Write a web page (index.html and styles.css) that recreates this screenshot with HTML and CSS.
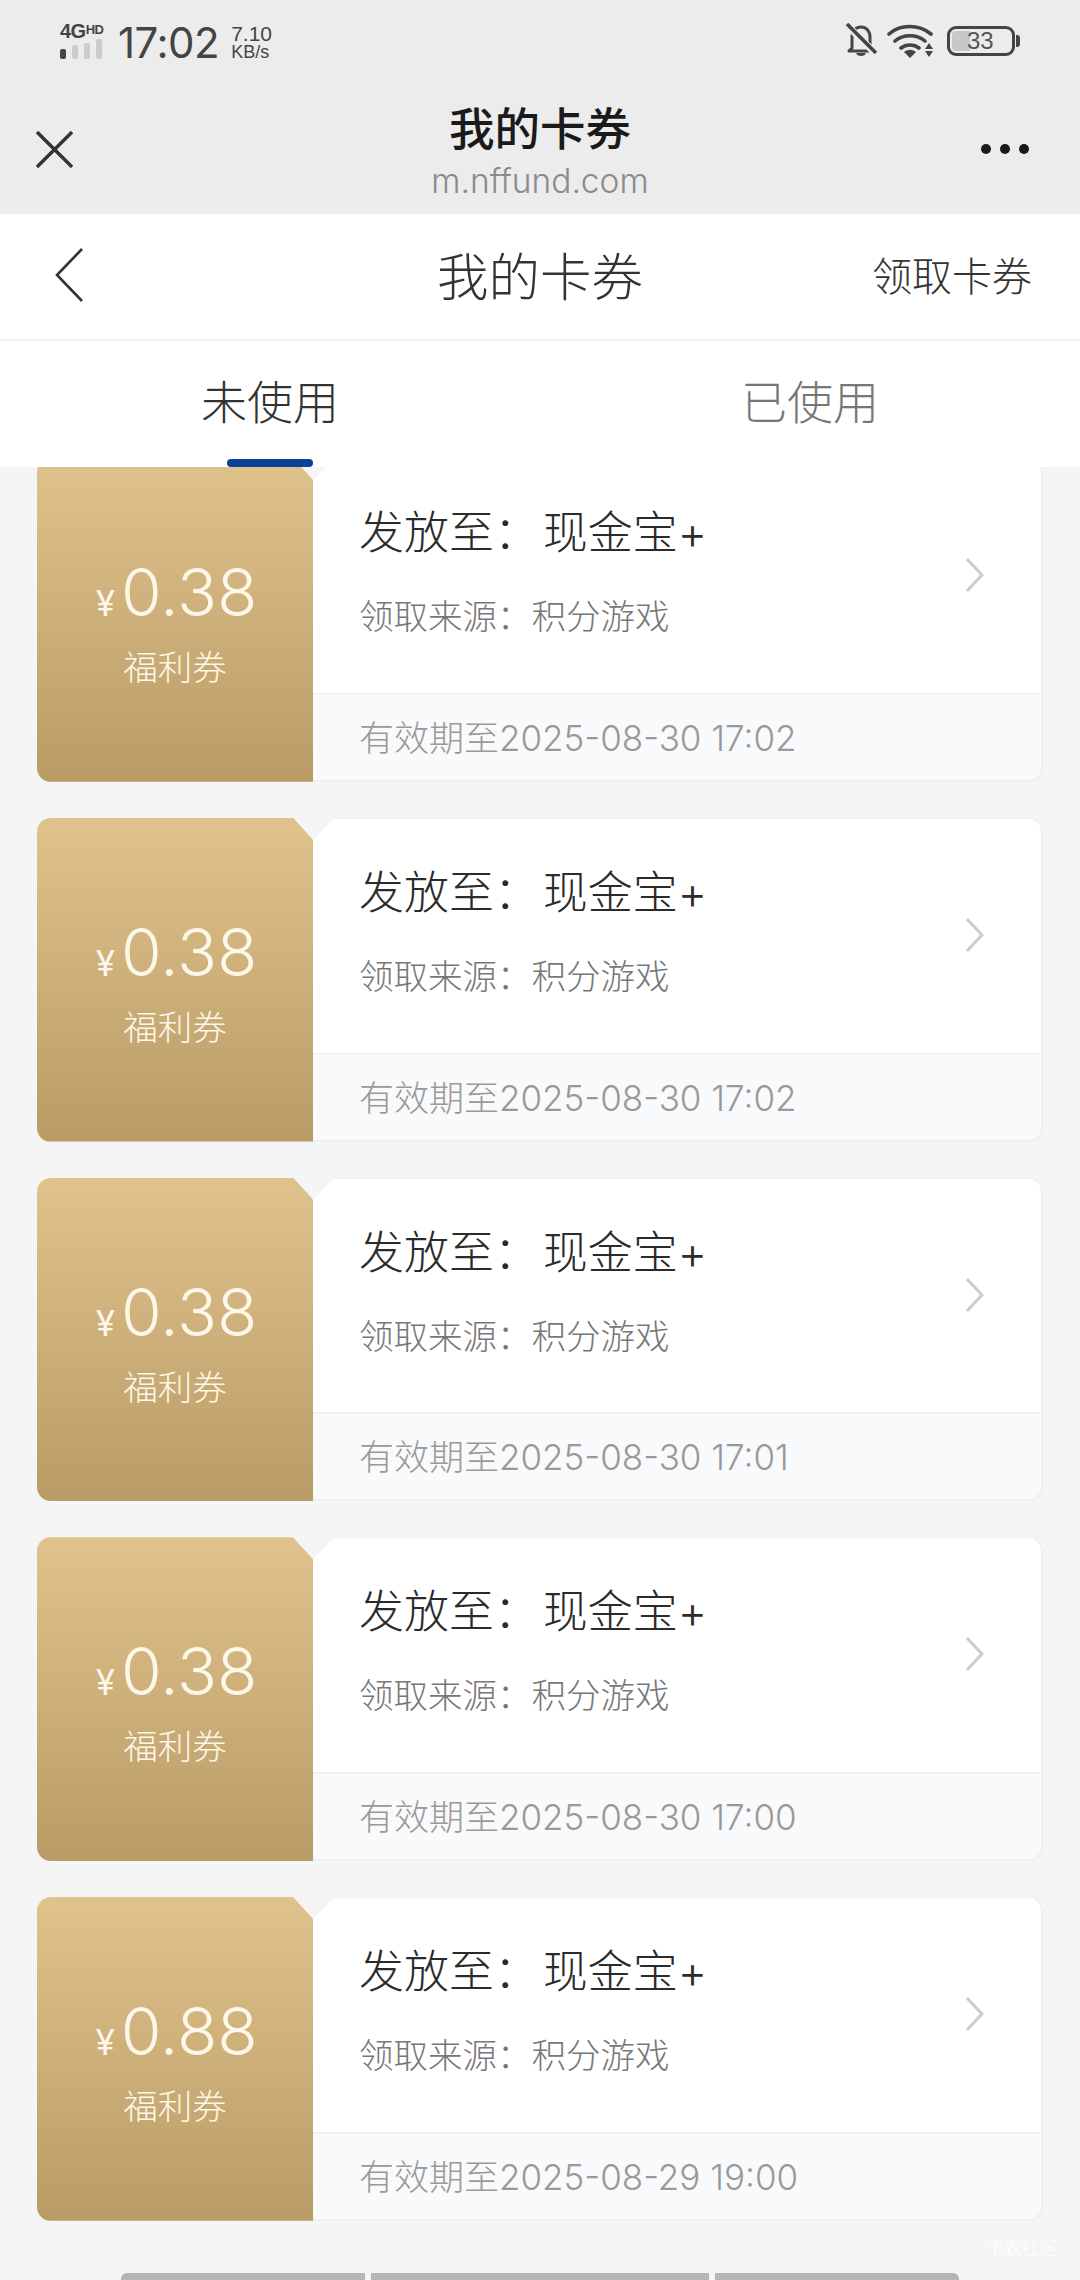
FILE: index.html
```html
<!DOCTYPE html>
<html lang="zh-CN">

<head>
    <meta charset="UTF-8">
    <title>我的卡券</title>
    <link rel="stylesheet" href="styles.css">
</head>

<body>
    <div class="phone">
        <div class="top">
            <div class="status">
                <div class="statusLeft">
                    <div class="signal">
                        <div class="net">4G<span class="hd">HD</span></div>
                        <div class="bars">
                            <i class="on"></i><i class="b2"></i><i class="b3"></i><i class="b4"></i>
                        </div>
                    </div>
                    <span class="time">17:02</span>
                    <div class="speed"><span>7.10</span><span class="unit">KB/s</span></div>
                </div>
                <div class="statusRight">
                    <svg class="bell" width="32" height="36" viewBox="0 0 32 36">
                        <path d="M7 25V14C7 8 11 4 16 4s9 4 9 10v11l3 3H4z" fill="none" stroke="#444" stroke-width="3" stroke-linejoin="round"/>
                        <path d="M11 30c1 4 9 4 10 0z" fill="#444"/>
                        <path d="M2 2l28 28" stroke="#ececec" stroke-width="7"/>
                        <path d="M2 1l29 29" stroke="#444" stroke-width="3.5"/>
                    </svg>
                    <svg class="wifi" width="48" height="36" viewBox="0 0 48 36">
                        <path d="M2 11C13 1 32 1 44 11M8 18c8-7 22-7 30 0M14 25c5-4 13-4 18 0" fill="none" stroke="#444" stroke-width="3.6" stroke-linecap="round"/>
                        <path d="M17 29c4-3 8-3 12 0l-6 6z" fill="#444"/>
                        <path d="M42 20l4 6h-8zM38 28h8l-4 6z" fill="#444"/>
                    </svg>
                    <div class="battery">
                        <div class="batLevel"></div>
                        <span class="batNum">33</span>
                    </div>
                    <div class="batCap"></div>
                </div>
            </div>
            <div class="webHead">
                <svg class="close" width="37" height="37" viewBox="0 0 37 37">
                    <path d="M1 1l35 35M36 1L1 36" stroke="#333" stroke-width="3.4" fill="none"/>
                </svg>
                <div class="webTitle">
                    <p class="webName">我的卡券</p>
                    <p class="webUrl">m.nffund.com</p>
                </div>
                <div class="dots"><i></i><i></i><i></i></div>
            </div>
        </div>

        <div class="nav">
            <svg class="back" width="28" height="54" viewBox="0 0 28 54">
                <path d="M27 1L2 27l25 26" fill="none" stroke="#333" stroke-width="2.6"/>
            </svg>
            <div class="navTitle">我的卡券</div>
            <div class="navLink">领取卡券</div>
        </div>

        <div class="tabs">
            <div class="tab active"><span>未使用</span></div>
            <div class="tab"><span>已使用</span></div>
        </div>

        <div class="list">
            <div class="card">
                <div class="gold">
                    <div class="money"><span class="yen">¥</span>0.38</div>
                    <div class="kind">福利券</div>
                </div>
                <div class="main">
                    <div class="info">
                        <div>
                            <p class="to">发放至： 现金宝+</p>
                            <p class="from">领取来源：积分游戏</p>
                        </div>
                        <svg class="arrow" width="18" height="34" viewBox="0 0 18 34">
                            <path d="M1 1l15 16L1 33" fill="none" stroke="#ccc" stroke-width="3"/>
                        </svg>
                    </div>
                    <div class="date">有效期至2025-08-30 17:02</div>
                </div>
            </div>
            <div class="card">
                <div class="gold">
                    <div class="money"><span class="yen">¥</span>0.38</div>
                    <div class="kind">福利券</div>
                </div>
                <div class="main">
                    <div class="info">
                        <div>
                            <p class="to">发放至： 现金宝+</p>
                            <p class="from">领取来源：积分游戏</p>
                        </div>
                        <svg class="arrow" width="18" height="34" viewBox="0 0 18 34">
                            <path d="M1 1l15 16L1 33" fill="none" stroke="#ccc" stroke-width="3"/>
                        </svg>
                    </div>
                    <div class="date">有效期至2025-08-30 17:02</div>
                </div>
            </div>
            <div class="card">
                <div class="gold">
                    <div class="money"><span class="yen">¥</span>0.38</div>
                    <div class="kind">福利券</div>
                </div>
                <div class="main">
                    <div class="info">
                        <div>
                            <p class="to">发放至： 现金宝+</p>
                            <p class="from">领取来源：积分游戏</p>
                        </div>
                        <svg class="arrow" width="18" height="34" viewBox="0 0 18 34">
                            <path d="M1 1l15 16L1 33" fill="none" stroke="#ccc" stroke-width="3"/>
                        </svg>
                    </div>
                    <div class="date">有效期至2025-08-30 17:01</div>
                </div>
            </div>
            <div class="card">
                <div class="gold">
                    <div class="money"><span class="yen">¥</span>0.38</div>
                    <div class="kind">福利券</div>
                </div>
                <div class="main">
                    <div class="info">
                        <div>
                            <p class="to">发放至： 现金宝+</p>
                            <p class="from">领取来源：积分游戏</p>
                        </div>
                        <svg class="arrow" width="18" height="34" viewBox="0 0 18 34">
                            <path d="M1 1l15 16L1 33" fill="none" stroke="#ccc" stroke-width="3"/>
                        </svg>
                    </div>
                    <div class="date">有效期至2025-08-30 17:00</div>
                </div>
            </div>
            <div class="card">
                <div class="gold">
                    <div class="money"><span class="yen">¥</span>0.88</div>
                    <div class="kind">福利券</div>
                </div>
                <div class="main">
                    <div class="info">
                        <div>
                            <p class="to">发放至： 现金宝+</p>
                            <p class="from">领取来源：积分游戏</p>
                        </div>
                        <svg class="arrow" width="18" height="34" viewBox="0 0 18 34">
                            <path d="M1 1l15 16L1 33" fill="none" stroke="#ccc" stroke-width="3"/>
                        </svg>
                    </div>
                    <div class="date">有效期至2025-08-29 19:00</div>
                </div>
            </div>
        </div>

        <div class="bottomBar">
            <i class="seg1"></i><i class="seg2"></i><i class="seg3"></i>
        </div>
        <div class="mark">卡农社区</div>
    </div>
</body>

</html>
```

FILE: styles.css
```css
* {
    margin: 0;
    padding: 0;
    box-sizing: border-box;
}

body {
    width: 1080px;
    height: 2280px;
    overflow: hidden;
    background: #f5f5f5;
    font-family: "Inter", "Noto Sans CJK SC", sans-serif;
    font-weight: 300;
    color: #333;
}

.phone {
    position: relative;
    display: flex;
    flex-direction: column;
    height: 2280px;
}

/* status bar + web view title */
.top {
    height: 214px;
    background: #ececec;
    flex: none;
}

.status {
    height: 82px;
    display: flex;
    justify-content: space-between;
    align-items: flex-start;
    padding: 20px 60px 0 60px;
    color: #444;
}

.statusLeft {
    display: flex;
    align-items: center;
}

.signal {
    width: 46px;
    margin: 0 12px 6px 0;
}

.net {
    font-family: "Liberation Sans", sans-serif;
    font-weight: 700;
    font-size: 20px;
    line-height: 15px;
    letter-spacing: -0.5px;
    white-space: nowrap;
}

.hd {
    font-size: 13px;
    vertical-align: 4px;
}

.bars {
    display: flex;
    gap: 6px;
    align-items: flex-end;
    height: 20px;
}

.bars i {
    width: 6px;
    background: #ccc;
    border-radius: 2px;
}

.bars .on {
    height: 10px;
    background: #444;
}

.bars .b2 {
    height: 14px;
}

.bars .b3 {
    height: 16px;
}

.bars .b4 {
    height: 20px;
}

.time {
    font-size: 42px;
    line-height: 46px;
    font-weight: 400;
    letter-spacing: -0.5px;
}

.speed {
    display: flex;
    flex-direction: column;
    margin-left: 12px;
    font-family: "Liberation Sans", sans-serif;
    font-weight: 400;
    font-size: 21px;
    line-height: 18px;
}

.unit {
    font-size: 18px;
}

.statusRight {
    display: flex;
    align-items: center;
    height: 42px;
}

.bell {
    margin-right: 10px;
}

.wifi {
    margin-right: 12px;
}

.battery {
    position: relative;
    width: 68px;
    height: 30px;
    border: 3px solid #444;
    border-radius: 9px;
    padding: 2px;
}

.batLevel {
    width: 18px;
    height: 100%;
    background: #c8c8c8;
    border-radius: 4px 0 0 4px;
}

.batNum {
    position: absolute;
    left: 17px;
    top: -2px;
    font-family: "Liberation Sans", sans-serif;
    font-weight: 400;
    font-size: 24px;
    line-height: 28px;
    color: #555;
}

.batCap {
    width: 4px;
    height: 12px;
    margin-left: 1px;
    background: #444;
    border-radius: 0 3px 3px 0;
}

.webHead {
    height: 132px;
    display: grid;
    grid-template-columns: 1fr auto 1fr;
    align-items: center;
    padding: 0 36px;
}

.close {
    margin-top: 2px;
}

.webTitle {
    text-align: center;
    margin-top: 7px;
}

.webName {
    font-size: 45.5px;
    line-height: 58px;
    font-weight: 500;
    color: #1a1a1a;
}

.webUrl {
    font-size: 33.5px;
    line-height: 44px;
    color: #8a8a8a;
}

.dots {
    display: flex;
    justify-content: flex-end;
    gap: 9px;
    margin: 2px 15px 0 0;
}

.dots i {
    width: 10px;
    height: 10px;
    border-radius: 50%;
    background: #1a1a1a;
}

/* page header */
.nav {
    height: 127px;
    flex: none;
    display: grid;
    grid-template-columns: 1fr auto 1fr;
    align-items: center;
    padding: 0 48px 6px 48px;
    background: #fff;
    border-bottom: 2px solid #f2f2f2;
}

.back {
    margin: 3px 0 0 7px;
}

.navTitle {
    font-size: 51.5px;
}

.navLink {
    font-size: 40px;
    text-align: right;
}

.tabs {
    height: 126px;
    flex: none;
    display: flex;
    background: #fff;
}

.tab {
    flex: 1;
    position: relative;
    text-align: center;
    font-size: 46px;
    line-height: 122px;
    color: #777;
}

.tab.active {
    color: #333;
}

.tab.active::after {
    content: "";
    position: absolute;
    left: 227px;
    bottom: 0;
    width: 86px;
    height: 8px;
    border-radius: 4px;
    background: #0a4296;
}

/* coupon list, scrolled a little */
.list {
    flex: 1;
    overflow: hidden;
    padding: 0 37px 0 37px;
}

.card {
    height: 323.75px;
    margin-bottom: 36px;
    display: flex;
}

.card:first-child {
    margin-top: -9px;
}

.gold {
    width: 276px;
    flex: none;
    display: flex;
    flex-direction: column;
    align-items: center;
    padding: 94px 0 0 3px;
    border-radius: 14px 0 0 14px;
    background: linear-gradient(#e0c38c, #b99b66);
    clip-path: polygon(0 0, 256px 0, 100% 22px, 100% 100%, 0 100%);
    color: #fdf7ea;
}

.money {
    font-size: 66px;
    line-height: 80px;
}

.yen {
    font-size: 35px;
    font-weight: 400;
    margin-right: 6px;
}

.kind {
    font-size: 34.5px;
    line-height: 50px;
    margin: 0 0 0 -3px;
}

.main {
    flex: 1;
    display: flex;
    flex-direction: column;
    background: #fff;
    border: 2px solid #efefef;
    border-top-width: 1px;
    border-left: 0;
    border-radius: 0 14px 14px 0;
    clip-path: polygon(22px 0, 100% 0, 100% 100%, 0 100%, 0 22px);
}

.info {
    flex: 1;
    display: flex;
    justify-content: space-between;
    align-items: flex-start;
    padding: 44px 57px 0 46px;
    border-bottom: 2px solid #f0f1f4;
}

.to {
    font-size: 45px;
    line-height: 60px;
    color: #2b2b2b;
    word-spacing: -9px;
}

.from {
    font-size: 34.5px;
    line-height: 46px;
    margin-top: 31px;
    color: #777;
}

.arrow {
    margin-top: 55px;
}

.date {
    height: 85px;
    flex: none;
    padding-left: 46px;
    font-size: 35px;
    line-height: 87px;
    color: #999;
    background: #f9fafc;
    border-radius: 0 0 12px 0;
}

/* remains of the bottom bar, cut off by the screen edge */
.bottomBar {
    flex: none;
    height: 7px;
    display: flex;
    gap: 6px;
    padding: 0 121px;
}

.bottomBar i {
    background: #b5b5b5;
}

.seg1 {
    width: 244px;
    border-radius: 6px 0 0 0;
}

.seg2 {
    width: 338px;
}

.seg3 {
    width: 244px;
    border-radius: 0 6px 0 0;
}

.mark {
    position: absolute;
    right: 22px;
    bottom: 20px;
    font-size: 18px;
    font-weight: 400;
    color: rgba(255, 255, 255, 0.75);
}
```
